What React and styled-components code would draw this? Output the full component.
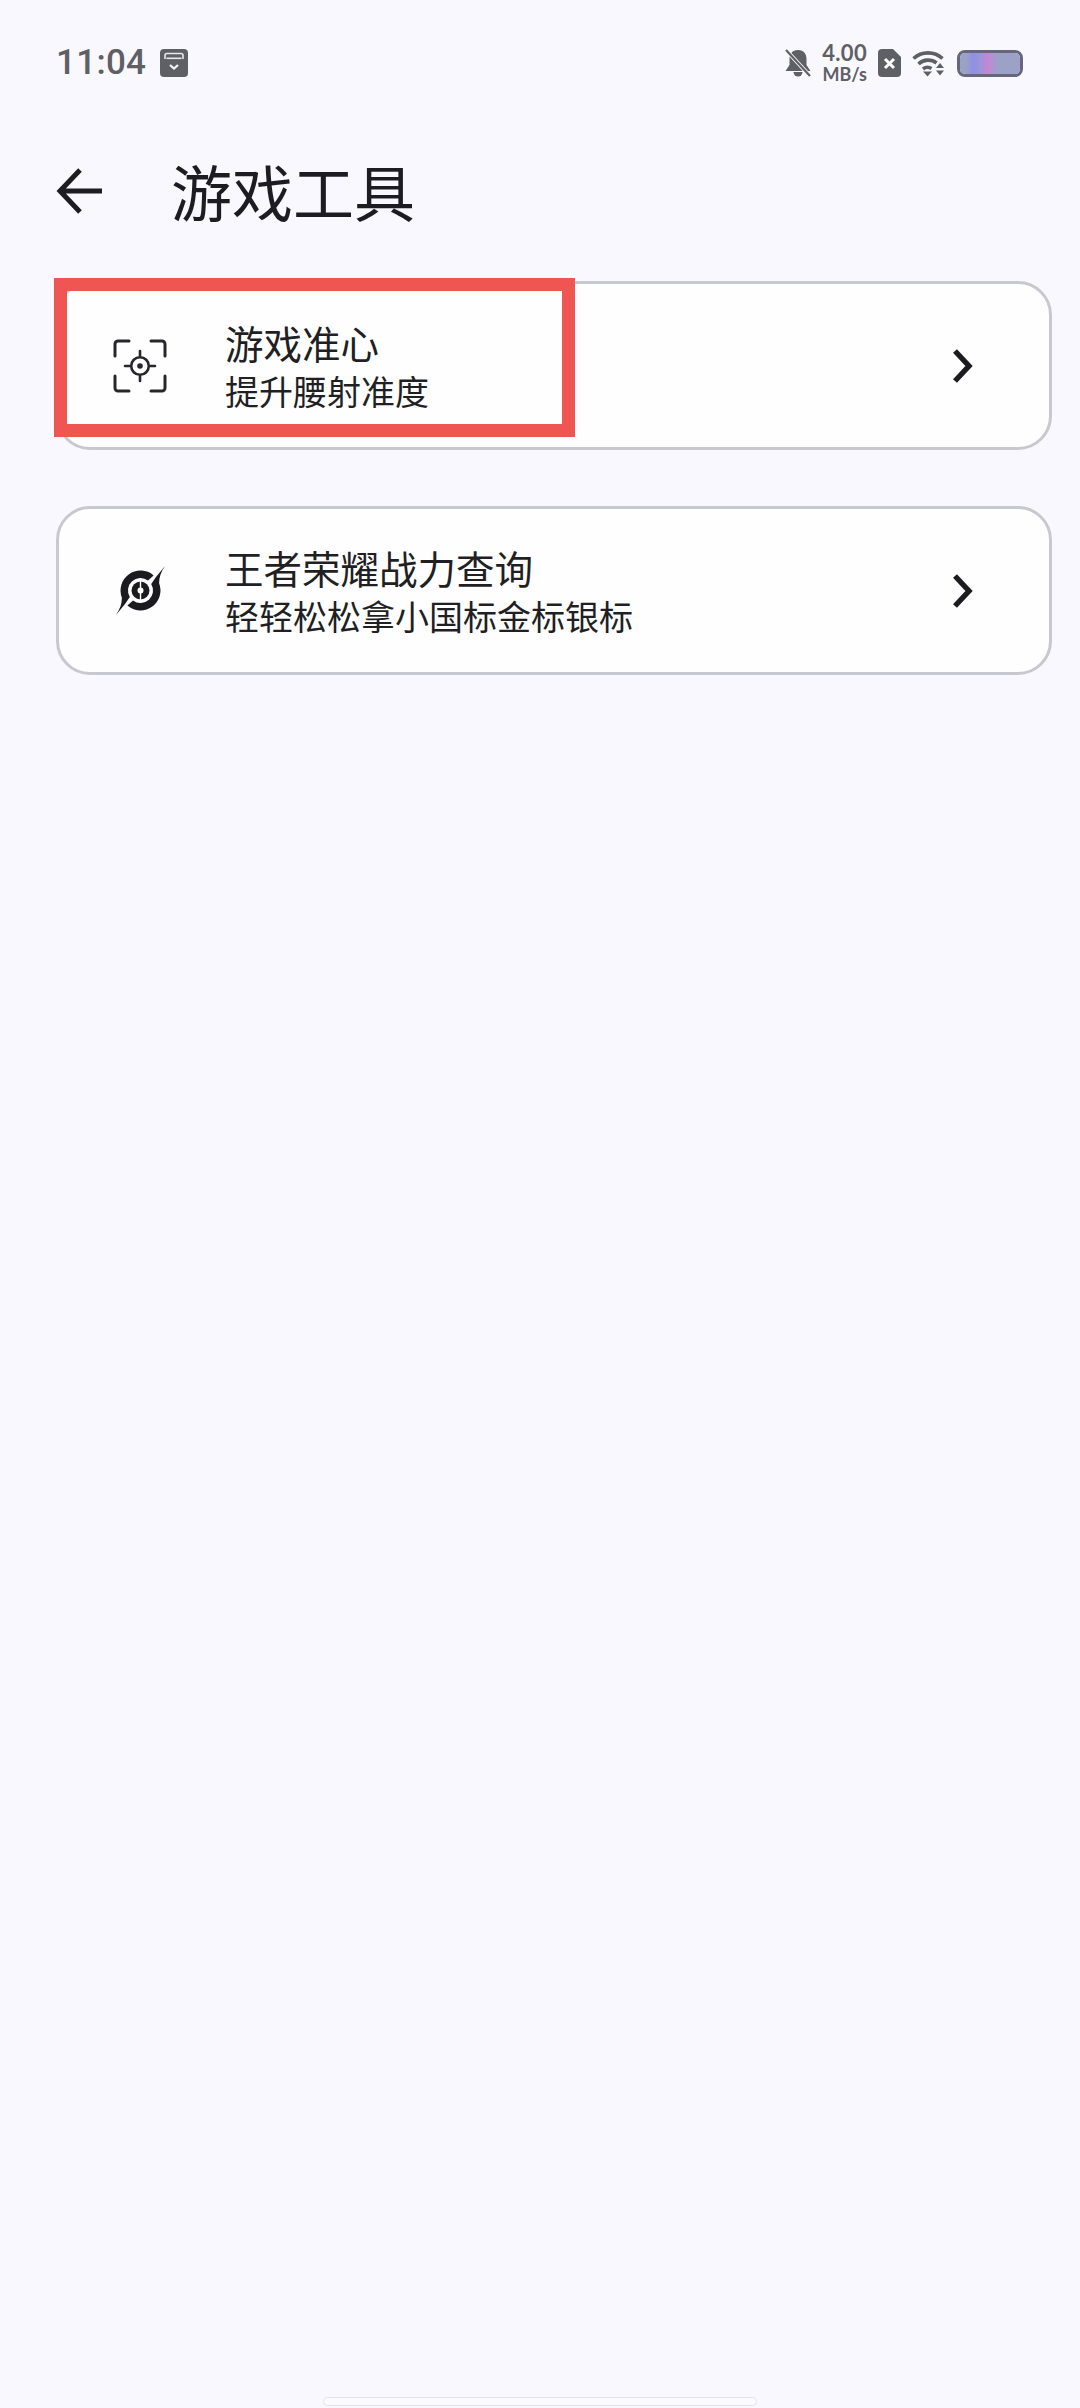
import styled, { createGlobalStyle } from "styled-components";

const GlobalStyle = createGlobalStyle`
  html, body {
    margin: 0;
    padding: 0;
    background: #f8f8fe;
  }

  * {
    box-sizing: border-box;
  }
`;

const tools = [
  { title: "游戏准心", subtitle: "提升腰射准度", icon: <CrosshairIcon />, marked: true },
  { title: "王者荣耀战力查询", subtitle: "轻轻松松拿小国标金标银标", icon: <KingLogo /> },
];

export default function App() {
  return (
    <SCPage>
      <GlobalStyle />
      <SCStatusBar>
        <SCStatusLeft>
          <SCTime>11:04</SCTime>
          <InboxIcon />
        </SCStatusLeft>
        <SCStatusRight>
          <BellOffIcon />
          <SCSpeed>
            <span>4.00</span>
            <small>MB/s</small>
          </SCSpeed>
          <SimOffIcon />
          <WifiIcon />
          <SCBattery>
            <SCBatteryGlow />
          </SCBattery>
        </SCStatusRight>
      </SCStatusBar>

      <SCHeader>
        <BackArrow />
        <SCTitle>游戏工具</SCTitle>
      </SCHeader>

      <SCList>
        {tools.map((tool) => (
          <SCCard key={tool.title}>
            <SCIconBox>{tool.icon}</SCIconBox>
            <SCTexts>
              <SCCardTitle>{tool.title}</SCCardTitle>
              <SCCardSubtitle>{tool.subtitle}</SCCardSubtitle>
            </SCTexts>
            <Chevron />
            {tool.marked && <SCHighlight />}
          </SCCard>
        ))}
      </SCList>

      <SCHomeBar />
    </SCPage>
  );
}

function CrosshairIcon() {
  return (
    <svg width="80" height="80" viewBox="0 0 80 80" fill="none" stroke="#26262c" strokeWidth="3" strokeLinecap="round">
      <path d="M15 30V18a3 3 0 0 1 3-3h11" />
      <path d="M51 15h11a3 3 0 0 1 3 3v12" />
      <path d="M15 50v12a3 3 0 0 0 3 3h11" />
      <path d="M51 65h11a3 3 0 0 0 3-3V50" />
      <circle cx="40" cy="40" r="8.8" strokeWidth="2.6" />
      <circle cx="40" cy="40" r="2.8" fill="#26262c" stroke="none" />
      <path d="M40 25v5M40 50v5M25 40h5M50 40h5" strokeWidth="2.6" />
    </svg>
  );
}

function KingLogo() {
  // two crescents with a tail each, the second is the first turned half way round
  const crescent = "M16 64C20 58 21.900 53 21.900 46.800A20 20 0 0 1 53.600 24.400L48 29.500A12.500 12.500 0 0 0 29.800 46L25 53Z";
  return (
    <svg width="80" height="80" viewBox="0 0 80 80" fill="#1b1b1f">
      <path d={crescent} />
      <path d={crescent} transform="rotate(180 40.5 39.5)" />
      <circle cx="40.5" cy="39.5" r="9" />
      <path d="M40.5 29v21" stroke="#fff" strokeWidth="1.4" />
      <circle cx="40.5" cy="39.5" r="3" fill="#fff" />
    </svg>
  );
}

function Chevron() {
  return (
    <SCChevron width="40" height="40" viewBox="0 0 40 40" fill="none" stroke="#1c1c20" strokeWidth="5.4">
      <path d="M12 5l14 15-14 15" />
    </SCChevron>
  );
}

function BackArrow() {
  return (
    <svg width="48" height="48" viewBox="0 0 48 48" fill="none" stroke="#1c1c22" strokeWidth="5">
      <path d="M4 24h42M24 3L4 24l20 21" />
    </svg>
  );
}

function InboxIcon() {
  return (
    <svg width="28" height="28" viewBox="0 0 28 28">
      <rect width="28" height="28" rx="4" fill="#5f5f66" />
      <path d="M5 10V6.500A2 2 0 0 1 7 4.500h14a2 2 0 0 1 2 2V10" fill="none" stroke="#e8e8ee" strokeWidth="1.6" />
      <rect x="6.500" y="8.500" width="15" height="1.6" fill="#e8e8ee" />
      <path d="M10 16l4 3.500 4-3.500" fill="none" stroke="#f4f4f8" strokeWidth="2.200" />
    </svg>
  );
}

function BellOffIcon() {
  return (
    <svg width="26" height="28" viewBox="0 0 26 28">
      <path d="M13 1c6 0 8.500 4 8.500 9v6l4 6H.500l4-6v-6C4.500 5 7 1 13 1z" fill="#5f5f66" />
      <path d="M8.500 23h9a4.500 4.500 0 0 1-9 0z" fill="#5f5f66" />
      <path d="M1 1l24 26" stroke="#f8f8fe" strokeWidth="4" />
      <path d="M1 1l24 26" stroke="#5f5f66" strokeWidth="2.200" />
    </svg>
  );
}

function SimOffIcon() {
  return (
    <svg width="23" height="28" viewBox="0 0 23 28">
      <path d="M4 0h11l8 8v16a4 4 0 0 1-4 4H4a4 4 0 0 1-4-4V4a4 4 0 0 1 4-4z" fill="#5f5f66" />
      <path d="M7 10l9 9M16 10l-9 9" stroke="#fff" strokeWidth="3" />
    </svg>
  );
}

function WifiIcon() {
  return (
    <svg width="33" height="27" viewBox="0 0 33 27" fill="none" stroke="#5f5f66" strokeWidth="3.600">
      <path d="M1.500 8.500C9.500 1 22.500 1 30.500 8.500" />
      <path d="M6.500 14C11.500 9 19.500 9 24.500 13" />
      <path d="M11 19c2.500-2 6-2 8.500-.5" />
      <path d="M11 21.500h9L15.500 26.500z" fill="#5f5f66" stroke="none" />
      <path d="M24 18h8l-4-5z" fill="#5f5f66" stroke="none" />
      <path d="M24 20.500h8l-4 5z" fill="#5f5f66" stroke="none" />
    </svg>
  );
}

const SCPage = styled.div`
  position: relative;
  width: 1080px;
  height: 2408px;
  overflow: hidden;
  background: #f8f8fe;
  font-family: "Noto Sans CJK SC", "Noto Sans", sans-serif;
  color: #1c1c22;
`;

const SCStatusBar = styled.div`
  height: 126px;
  padding: 0 57px 0 56px;
  display: flex;
  justify-content: space-between;
  align-items: center;
`;

const SCStatusLeft = styled.div`
  display: flex;
  align-items: center;
  gap: 14px;
`;

const SCTime = styled.span`
  font-family: Roboto, sans-serif;
  font-size: 35px;
  font-weight: 500;
  line-height: 44px;
  letter-spacing: 0.3px;
  color: #5f5f66;
`;

const SCStatusRight = styled.div`
  display: flex;
  align-items: center;
  gap: 11px;
`;

const SCSpeed = styled.div`
  display: flex;
  flex-direction: column;
  align-items: center;
  font-family: Lato, sans-serif;
  font-weight: 700;
  color: #5f5f66;

  span {
    font-size: 22px;
    line-height: 22px;
    letter-spacing: 0.3px;
  }

  small {
    font-size: 18px;
    line-height: 20px;
  }
`;

const SCBattery = styled.div`
  width: 66px;
  height: 27px;
  margin-left: 1px;
  border: 3px solid #66667c;
  border-radius: 8px;
  background: #9ca1c6;
  overflow: hidden;
`;

const SCBatteryGlow = styled.div`
  width: 100%;
  height: 100%;
  background: linear-gradient(
    90deg,
    #9ca1c6 0 10%,
    #8f8fe6 22%,
    #9a96d8 34%,
    #c486d4 44%,
    #b98fd0 52%,
    #9ca1c6 62%
  );
`;

const SCHeader = styled.div`
  height: 130px;
  padding-left: 56px;
  display: flex;
  align-items: center;
  gap: 67px;
`;

const SCTitle = styled.h1`
  margin: 0;
  font-size: 61px;
  font-weight: 400;
  line-height: 72px;
`;

const SCList = styled.div`
  margin: 25px 28px 0 56px;
  display: flex;
  flex-direction: column;
  gap: 56px;
`;

const SCCard = styled.div`
  position: relative;
  height: 169px;
  padding: 0 66px 0 41px;
  display: flex;
  align-items: center;
  background: #fefeff;
  border: 3px solid #c8c8d0;
  border-radius: 34px;
`;

const SCIconBox = styled.div`
  width: 80px;
  height: 80px;
  flex-shrink: 0;
`;

const SCTexts = styled.div`
  margin-left: 45px;
  display: flex;
  flex-direction: column;
`;

const SCCardTitle = styled.span`
  font-size: 38.5px;
  line-height: 50px;
  color: #1f1f24;
`;

const SCCardSubtitle = styled.span`
  font-size: 34px;
  line-height: 48px;
  color: #1f1f24;
`;

const SCChevron = styled.svg`
  margin-left: auto;
  flex-shrink: 0;
`;

const SCHighlight = styled.div`
  position: absolute;
  top: -6px;
  left: -5px;
  width: 521px;
  height: 159px;
  border: 13px solid #ef5551;
`;

const SCHomeBar = styled.div`
  position: absolute;
  left: 323px;
  bottom: 2px;
  width: 434px;
  height: 9px;
  background: #fbfbff;
  border: 1px solid #e2e2ea;
  border-radius: 5px;
`;
